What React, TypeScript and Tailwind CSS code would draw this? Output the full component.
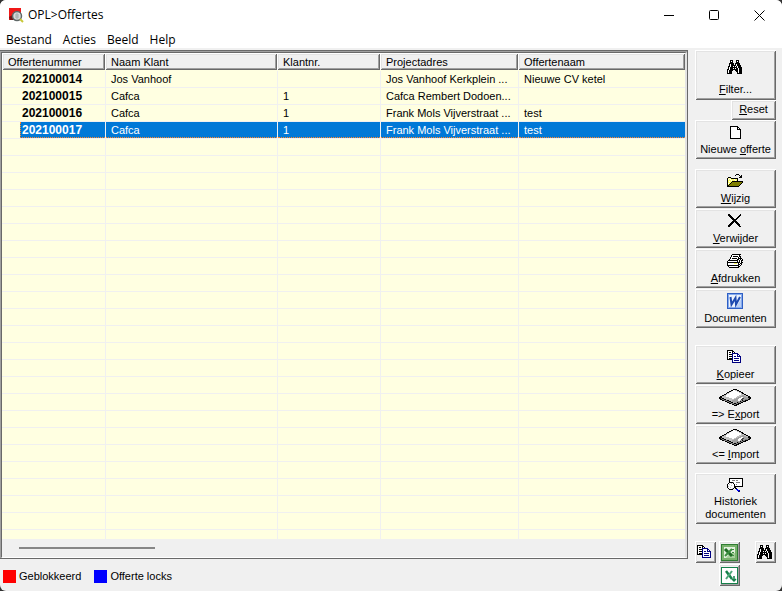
import type { ReactNode } from "react";
import { clsx } from "clsx";

const palette: Record<string, string> = {
  k: "#000000",
  w: "#ffffff",
  y: "#ffff66",
  o: "#808000",
  n: "#000080",
  g: "#808080",
  s: "#c0c0c0",
  b: "#0000ff",
};

// One character is one pixel, a dot is transparent.
const PixelIcon = ({ rows }: { rows: string[] }) => (
  <svg
    width={rows[0].length}
    height={rows.length}
    shapeRendering="crispEdges"
    aria-hidden="true"
    className="block shrink-0"
  >
    {rows.map((row, y) =>
      row.split("").map((c, x) =>
        c === "." ? null : <rect key={`${x}-${y}`} x={x} y={y} width="1" height="1" fill={palette[c]} />
      )
    )}
  </svg>
);

const binoculars = [
  "...kkk...kkk....",
  "...kwk...kwk....",
  "...kkk...kkk....",
  "..kkkkk.kkkkk...",
  "..kwkkk.kwkkk...",
  "..kwkkkkkwkkkk..",
  ".kkwkkwkwkwkkk..",
  ".kwkkkkkkkwkkkk.",
  ".kwkkkwkwkkwkkk.",
  "kkwkkkkkkkkwkkk.",
  "kwkkkk..kkkwkkk.",
  "kwkkk....kkwkkk.",
  "kwkkk.....kwkkk.",
  "kkkkk.....kkkkk.",
];

const page = [
  "kkkkkkkk...",
  "kwwwwwwkk..",
  "kwwwwwwkwk.",
  "kwwwwwwkkkk",
  "kwwwwwwwwwk",
  "kwwwwwwwwwk",
  "kwwwwwwwwwk",
  "kwwwwwwwwwk",
  "kwwwwwwwwwk",
  "kwwwwwwwwwk",
  "kwwwwwwwwwk",
  "kwwwwwwwwwk",
  "kkkkkkkkkkk",
];

const folder = [
  ".........kkk....",
  "........k...k.k.",
  ".............kk.",
  ".kkk........kkk.",
  "kywykkkkkkk.....",
  "kwywyyywyyk.....",
  "kyyywyyywyk.....",
  "kywyykkkkkkkkkkk",
  "kyyykooooooooook",
  "kwykooooooooook.",
  "kykooooooooook..",
  "kkooooooooook...",
  "kkkkkkkkkkkk....",
  "................",
];

const cross = [
  "kk..........k.",
  "kkk........kk.",
  ".kkk......kk..",
  "..kkk....kk...",
  "...kkk..kk....",
  "....kkkkk.....",
  ".....kkk......",
  "....kkkkk.....",
  "...kkk.kkk....",
  "..kkk...kkk...",
  ".kkk.....kkk..",
  "kkk.......kk..",
  "kk.........kk.",
  "..............",
  "..............",
];

const printer = [
  ".....kkkkkkkkk..",
  "....kwwwwwwwk...",
  "....kwkkkkkwkk..",
  "...kwwwwwwwkwk..",
  "...kwkkkkkwkkkk.",
  "..kwwwwwwwkkwkwk",
  ".kkkkkkkkkkwkwkk",
  "kwwwwwwwwwkwkwk.",
  "kkkkkkkkkkkkkwkk",
  "kwwwwwwyyywkwkk.",
  "kwwwwwwwwwwkkwk.",
  "kkkkkkkkkkkkwk..",
  ".kwwwwwwwwwkk...",
  "..kkkkkkkkkk....",
];

const copy = [
  "kkkkkk..........",
  "kwwwwkk.........",
  "kwkkwkwk........",
  "kwwwwnnnnnn.....",
  "kwkkknwwwwnn....",
  "kwwwwnwwwwnwn...",
  "kwkkknwnnwnnnn..",
  "kwwwwnwwwwwwwn..",
  "kwkkknwnnnnnwn..",
  "kkkkknwwwwwwwn..",
  ".....nwnnnnnwn..",
  ".....nwwwwwwwn..",
  ".....nnnnnnnnn..",
  "................",
];

const history = [
  "..kkkkkkkkkkkkkk",
  "..kwwwwwwwwwwwwk",
  "..kwwgggwggwwwwk",
  "..kwwwwwwwwwwwwk",
  "..kkkkgwwggggwwk",
  ".kwwswkwwwwwwwwk",
  "kwswwwwkwgwwwwwk",
  "kwwwswwkwwwwwwwk",
  "kswwwwwkkkkkkkkk",
  "kwwswwwkk.......",
  ".kwwwsk.kk......",
  "..kkkk...bb.....",
  "..........bbn...",
  "...........nn...",
];

const DiskIcon = () => (
  <svg width="33" height="18" shapeRendering="crispEdges" aria-hidden="true" className="block">
    <path d="M0 9 15 1h2l15 8v2l-15 7h-1L0 11z" fill="#000" />
    <path d="M2 9 15 2h2l13 7-13 6h-2z" fill="#c0c0c0" />
    <path d="m6 8 9-6 8 4-9 5z" fill="#fff" />
    <path d="m12 13 12-6 6 3-13 5h-1z" fill="#a0a0a0" />
    <path d="m18 12 5-3 2 1-5 3z" fill="#fff" />
    <path d="m21 12 3-2 1 1-2 1z" fill="#404040" />
    <path d="M2 11v-1l14 6 14-6v1l-14 6z" fill="#808080" />
  </svg>
);

const WordIcon = () => (
  <svg width="16" height="16" aria-hidden="true" className="block">
    <rect width="16" height="16" fill="#2f5fc4" />
    <rect x="1" y="1" width="14" height="14" fill="#86abed" />
    <path d="M2 2h12v12H2z" fill="#edf3fd" />
    <path d="M9 14h5V6z" fill="#b9cff5" />
    <path d="m3.500 4 1 7.500L8.500 5l.5 6.500L13 4" fill="none" stroke="#1f4bb0" strokeWidth="2" />
  </svg>
);

const ExcelIcon = () => (
  <svg width="17" height="17" aria-hidden="true" className="block">
    <rect width="17" height="17" fill="#2f7d32" />
    <rect x="1" y="1" width="15" height="15" fill="#79b36d" />
    <rect x="3" y="3" width="11" height="11" fill="#e4f1df" />
    <path d="M9 9h5v5H5z" fill="#a8cf9d" />
    <path d="m4 5 7 7" stroke="#1f6b25" strokeWidth="3" />
    <path d="m11 5-7 7" stroke="#3c8f3f" strokeWidth="2" />
    <path d="M10 5.500h3M11 8.500h2M11 11.500h2" stroke="#3c8f3f" />
  </svg>
);

const ExcelExportIcon = () => (
  <svg width="17" height="17" aria-hidden="true" className="block">
    <rect x=".5" y=".5" width="16" height="16" fill="#fff" stroke="#15804a" />
    <path d="m5 4 6 8" stroke="#15804a" strokeWidth="2.500" />
    <path d="m11 4-6 8" stroke="#4ca777" strokeWidth="2" />
    <path d="M13 9v5m-2-2 2 2 2-2" fill="none" stroke="#15804a" strokeWidth="1.500" />
  </svg>
);

const AppIcon = () => (
  <svg width="15" height="15" aria-hidden="true" className="block">
    <path d="M0 0h12v12H0z" fill="#f01818" />
    <path d="M0 9 5 6l4 6H1z" fill="#751414" />
    <circle cx="8" cy="8" r="4.500" fill="#d8dcdc" stroke="#606868" strokeWidth="1.500" />
    <path d="M6 7h4M6 9h4M8 5v6" stroke="#a2aaaa" />
    <path d="m11 11 3 3" stroke="#c8c838" strokeWidth="2" />
  </svg>
);

const bevel =
  "bg-[#f0f0f0] shadow-[inset_1px_1px_#ffffff,inset_-1px_-1px_#696969,inset_2px_2px_#e3e3e3,inset_-2px_-2px_#a0a0a0]";

interface ToolButtonProps {
  icon?: ReactNode;
  label?: string;
  className?: string;
  children?: ReactNode;
}

const ToolButton = ({ icon, label, className, children }: ToolButtonProps) => (
  <button
    type="button"
    aria-label={label}
    className={clsx("flex flex-col items-center text-[11px] leading-[13px]", bevel, className)}
  >
    {icon && <span className="flex h-[18px] items-center justify-center pr-px">{icon}</span>}
    {children && <span>{children}</span>}
  </button>
);

const columns = ["Offertenummer", "Naam Klant", "Klantnr.", "Projectadres", "Offertenaam"];

const offers = [
  ["202100014", "Jos Vanhoof", "", "Jos Vanhoof Kerkplein ...", "Nieuwe CV ketel"],
  ["202100015", "Cafca", "1", "Cafca Rembert Dodoen...", ""],
  ["202100016", "Cafca", "1", "Frank Mols Vijverstraat ...", "test"],
  ["202100017", "Cafca", "1", "Frank Mols Vijverstraat ...", "test"],
];

const selected = "202100017";
const emptyRows = Array.from({ length: 60 }, (_, i) => i);

const OfferTable = () => (
  <table className="w-full table-fixed border-separate border-spacing-0 text-[11px] leading-4">
    <colgroup>
      <col className="w-[103px]" />
      <col className="w-[172px]" />
      <col className="w-[103px]" />
      <col className="w-[138px]" />
      <col />
    </colgroup>
    <thead>
      <tr>
        {columns.map((name) => (
          <th key={name} className="h-[18px] p-0 pb-px text-left font-normal">
            <div className={clsx("h-[17px] pt-px pl-1.5", bevel)}>{name}</div>
          </th>
        ))}
      </tr>
    </thead>
    <tbody>
      {offers.map((offer) => {
        const active = offer[0] === selected;
        return (
          <tr key={offer[0]} aria-selected={active}>
            {offer.map((value, i) => (
              <td
                key={i}
                className={clsx(
                  "h-[17px] overflow-hidden border-b border-[#f0f0f0] p-0 whitespace-nowrap",
                  i > 0 && "border-l",
                  active && "text-white"
                )}
              >
                <div
                  className={clsx(
                    "h-4",
                    i === 0 ? "ml-[18px] text-[12px] font-bold" : "pl-[5px]",
                    i === 0 && (active ? "pl-px" : "pl-0.5"),
                    active && "border-b border-dotted border-[#ff8728] bg-[#0078d7]",
                    active && i === 0 && "border-l"
                  )}
                >
                  {value}
                </div>
              </td>
            ))}
          </tr>
        );
      })}
      {emptyRows.map((row) => (
        <tr key={row} aria-hidden="true">
          {columns.map((name, i) => (
            <td key={name} className={clsx("h-[17px] border-b border-[#f0f0f0] p-0", i > 0 && "border-l")} />
          ))}
        </tr>
      ))}
    </tbody>
  </table>
);

const TitleBar = () => (
  <header className="bg-white font-['Open_Sans','Noto_Sans',sans-serif] text-[12px]">
    <div className="flex h-[30px] items-center pl-[9px]">
      <AppIcon />
      <h1 className="flex-1 pl-1">OPL&gt;Offertes</h1>
      <button type="button" aria-label="Minimaliseren" className="flex h-[29px] w-[45px] items-center justify-center">
        <svg width="11" height="11" shapeRendering="crispEdges">
          <path d="M0 5h10v1H0z" />
        </svg>
      </button>
      <button type="button" aria-label="Maximaliseren" className="flex h-[29px] w-[45px] items-center justify-center">
        <svg width="11" height="11">
          <rect x=".5" y=".5" width="9" height="9" rx="1" fill="none" stroke="#000" />
        </svg>
      </button>
      <button type="button" aria-label="Sluiten" className="flex h-[29px] w-[45px] items-center justify-center">
        <svg width="11" height="11">
          <path d="m.5.5 10 10m0-10-10 10" stroke="#000" />
        </svg>
      </button>
    </div>
    <nav className="flex h-[18px] items-center gap-[11px] pt-0.5 pl-1.5">
      {["Bestand", "Acties", "Beeld", "Help"].map((item) => (
        <button key={item} type="button">
          {item}
        </button>
      ))}
    </nav>
  </header>
);

const SideBar = () => (
  <aside className="flex shrink-0 flex-col pr-1.5 pl-[7px]">
    <ToolButton className="h-[50px] gap-[7px] pt-2" icon={<PixelIcon rows={binoculars} />}>
      <u>F</u>ilter...
    </ToolButton>
    <ToolButton className="h-5 w-[45px] self-end pt-[3px]">
      <u>R</u>eset
    </ToolButton>
    <ToolButton className="h-[39px] w-[81px] gap-[2px] pt-[3px]" icon={<PixelIcon rows={page} />}>
      Nieuwe <u>o</u>fferte
    </ToolButton>
    <div className="flex flex-col gap-px pt-2.5">
      <ToolButton className="h-[39px] gap-[2px] pt-[3px]" icon={<PixelIcon rows={folder} />}>
        <u>W</u>ijzig
      </ToolButton>
      <ToolButton className="h-[39px] gap-[2px] pt-[3px]" icon={<PixelIcon rows={cross} />}>
        <u>V</u>erwijder
      </ToolButton>
      <ToolButton className="h-[39px] gap-[2px] pt-[3px]" icon={<PixelIcon rows={printer} />}>
        <u>A</u>fdrukken
      </ToolButton>
      <ToolButton className="h-[39px] gap-[2px] pt-[3px]" icon={<WordIcon />}>
        Documenten
      </ToolButton>
    </div>
    <div className="flex flex-col gap-px pt-[17px]">
      <ToolButton className="h-[39px] gap-[2px] pt-[3px]" icon={<PixelIcon rows={copy} />}>
        <u>K</u>opieer
      </ToolButton>
      <ToolButton className="h-[39px] gap-[2px] pt-[3px]" icon={<DiskIcon />}>
        =&gt; E<u>x</u>port
      </ToolButton>
      <ToolButton className="h-[39px] gap-[2px] pt-[3px]" icon={<DiskIcon />}>
        &lt;= <u>I</u>mport
      </ToolButton>
    </div>
    <ToolButton className="mt-[9px] h-[51px] gap-px pt-[3px]" icon={<PixelIcon rows={history} />}>
      Historiek
      <br />
      documenten
    </ToolButton>
    <div className="mt-[17px] grid grid-cols-[21px_21px_1fr] gap-x-[3px] gap-y-px">
      <ToolButton label="Kopieer lijst" className="h-[22px] w-[21px] pt-0.5" icon={<PixelIcon rows={copy} />} />
      <ToolButton label="Excel" className="h-[22px] w-[21px] pt-0.5" icon={<ExcelIcon />} />
      <ToolButton
        label="Zoeken"
        className="h-[22px] w-[21px] justify-self-end pt-0.5"
        icon={<PixelIcon rows={binoculars} />}
      />
      <ToolButton label="Excel export" className="col-start-2 h-[22px] w-[21px] pt-0.5" icon={<ExcelExportIcon />} />
    </div>
  </aside>
);

const App = () => {
  return (
    <div className="h-screen bg-[#333333] text-black">
      <div className="flex h-full flex-col overflow-hidden rounded-md bg-[#f0f0f0] font-['Liberation_Sans',Arial,sans-serif]">
        <TitleBar />
        <div className="flex min-h-0 flex-1 pt-0.5">
          <main className="flex min-w-0 flex-1 flex-col">
            <div className="min-h-0 flex-1 border-t border-r border-b border-[#696969]">
              <div className="flex h-full flex-col border-t border-l border-[#a0a0a0]">
                <div className="flex min-h-0 flex-1 flex-col border border-r-2 border-t-[#696969] border-r-[#e3e3e3] border-b-white border-l-[#696969]">
                  <div className="min-h-0 flex-1 overflow-hidden bg-[#ffffe1]">
                    <OfferTable />
                  </div>
                  <div className="flex h-[18px] shrink-0 items-center px-[17px]">
                    <div className="h-0.5 w-[21%] bg-[#868686]" />
                  </div>
                </div>
              </div>
            </div>
            <footer className="flex h-8 shrink-0 items-center gap-[13px] pt-[3px] pl-[3px] text-[11px]">
              <span className="flex items-center gap-[3px]">
                <span className="size-[13px] bg-[#ff0000]" />
                Geblokkeerd
              </span>
              <span className="flex items-center gap-[3px]">
                <span className="size-[13px] bg-[#0000ff]" />
                Offerte locks
              </span>
            </footer>
          </main>
          <SideBar />
        </div>
      </div>
    </div>
  );
};

export default App;
